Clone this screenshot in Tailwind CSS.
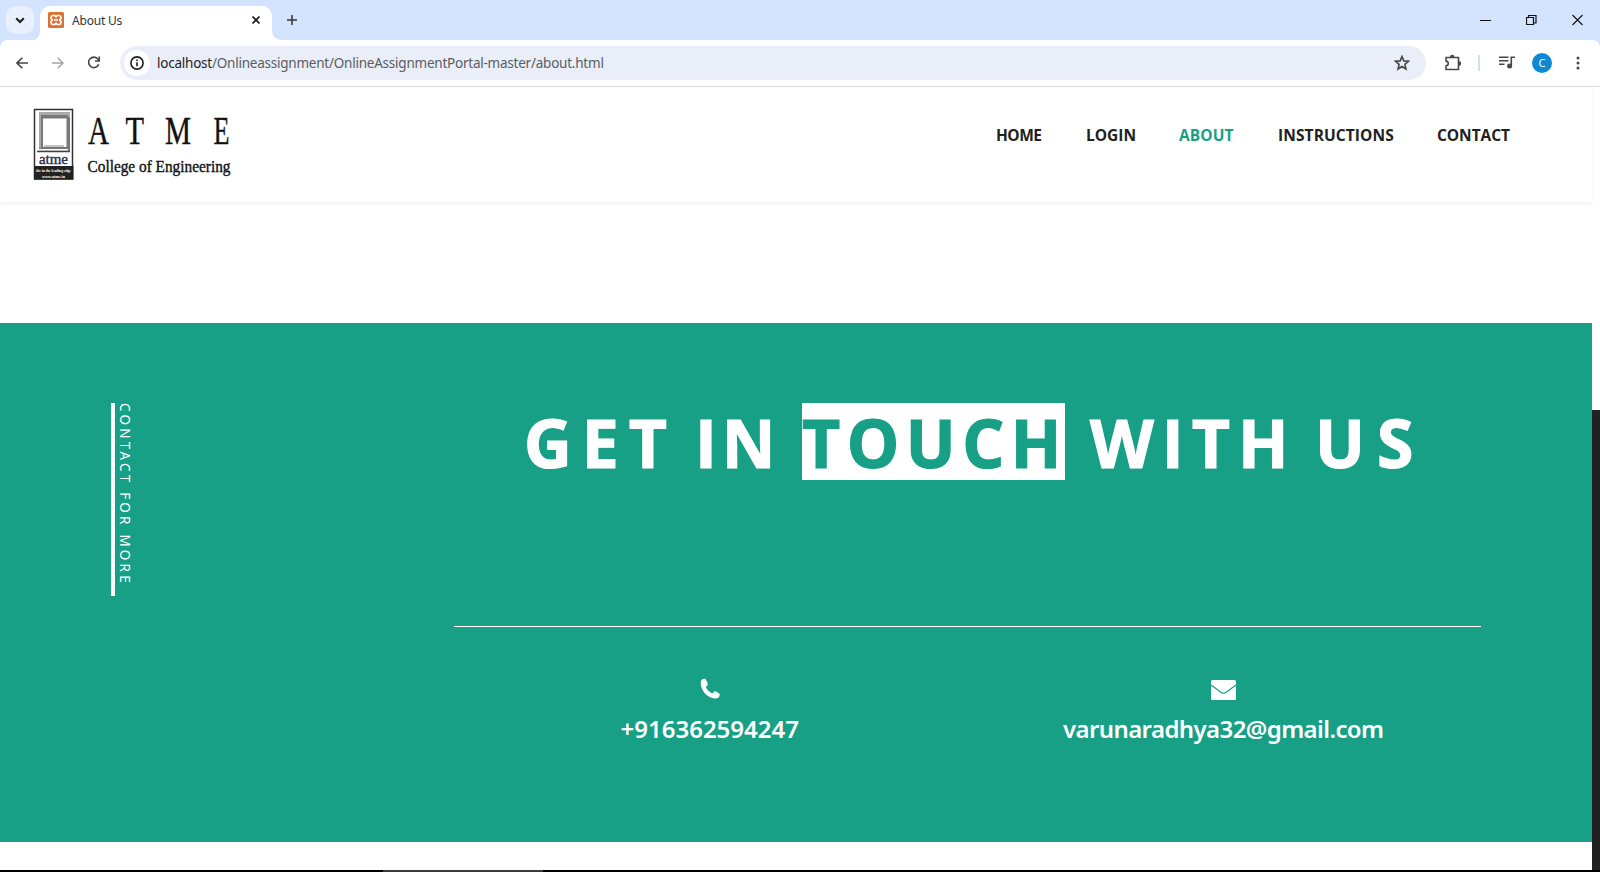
<!DOCTYPE html>
<html lang="en">
<head>
<meta charset="utf-8">
<title>About Us</title>
<script src="https://cdn.jsdelivr.net/npm/@tailwindcss/browser@4"></script>
</head>
<body class="w-[1600px] h-[872px] overflow-hidden bg-white flex flex-col font-['Noto_Sans',sans-serif]">
<!-- Tab strip -->
<div class="h-10 shrink-0 bg-[#d3e3fd] flex">
  <div class="mt-[6px] ml-[6px] size-7 rounded-[10px] bg-[#e9effd] flex items-center justify-center">
    <svg width="10" height="7" viewBox="0 0 10 7" fill="none" stroke="#1f1f1f" stroke-width="2"><path d="M1.2 1.2 5 5l3.800-3.800"/></svg>
  </div>
  <svg class="self-end" width="6" height="10" viewBox="0 0 6 10"><path d="M6 0v10H0Q6 8 6 0z" fill="#fff"/></svg>
  <div class="mt-[6px] w-[232px] rounded-t-[10px] bg-white flex items-start pl-2">
    <svg class="mt-[6px]" width="16" height="16" viewBox="0 0 16 16"><rect width="16" height="16" rx="1.500" fill="#dd7130"/><path d="M5 3.500h1.500c1 0 1 1.500 1.500 1.500s.5-1.500 1.500-1.500H11c2.500 0 2.500 3.300.8 4.500C13.500 9.200 13.500 12.500 11 12.500H9.500c-1 0-1-1.500-1.500-1.500s-.5 1.500-1.500 1.500H5C2.500 12.500 2.500 9.200 4.200 8 2.500 6.800 2.500 3.500 5 3.500zM6 8h4" fill="none" stroke="#fff" stroke-width="1.700"/></svg>
    <span class="ml-2 mt-[6px] w-[179px] text-xs leading-[18px] text-[#333] tracking-[-0.2px]">About Us</span>
    <svg class="mt-[10px] ml-[1px]" width="8" height="8" viewBox="0 0 8 8" stroke="#1f1f1f" stroke-width="1.600"><path d="M.5.5l7 7m0-7l-7 7"/></svg>
  </div>
  <svg class="self-end" width="8" height="10" viewBox="0 0 8 10"><path d="M0 0v10h8Q0 8 0 0z" fill="#fff"/></svg>
  <svg class="mt-[15px] ml-[7px]" width="10" height="10" viewBox="0 0 10 10" stroke="#333" stroke-width="1.500"><path d="M5 0v10M0 5h10"/></svg>
  <div class="ml-auto mt-[14px] mr-[17px] flex gap-[35px]">
    <svg width="11" height="12" stroke="#111"><path d="M0 6.500h11"/></svg>
    <svg width="11" height="12" fill="none" stroke="#111" stroke-width="1.200"><path d="M.5 3.500h7v7h-7zM2.500 3.500v-2h7.500v7.500H8"/></svg>
    <svg width="11" height="12" stroke="#111" stroke-width="1.100"><path d="M.5 1l10 10m0-10l-10 10"/></svg>
  </div>
</div>
<!-- Toolbar -->
<div class="h-[47px] shrink-0 bg-[#d3e3fd]">
 <div class="h-full bg-white rounded-t-[8px] border-b border-[#dcdcdc] flex items-center pb-[1px]">
  <svg class="ml-4" width="12" height="12" viewBox="0 0 12 12" fill="none" stroke="#474747" stroke-width="1.600"><path d="M12 6H1.200M6.300.7 1 6l5.300 5.300"/></svg>
  <svg class="ml-6" width="12" height="12" viewBox="0 0 12 12" fill="none" stroke="#a5a5a5" stroke-width="1.400"><path d="M0 6h10.800M5.700.7 11 6l-5.300 5.300"/></svg>
  <svg class="ml-6" width="12" height="13" viewBox="0 0 12 13" fill="none" stroke="#474747" stroke-width="1.600"><path d="M10.700 8.200A5.200 5.200 0 1 1 9.800 3l1.400 1.500M11.200.6V5H7"/></svg>
  <div class="ml-5 w-[1306px] h-[34px] rounded-full bg-[#e9eef8] flex items-center pl-1 pr-4">
    <div class="size-[26px] rounded-full bg-white flex items-center justify-center">
      <svg width="14" height="14" viewBox="0 0 14 14" fill="none" stroke="#1f1f1f" stroke-width="1.600"><circle cx="7" cy="7" r="6.100"/><path d="M7 6.300v4M7 3.600v1.500"/></svg>
    </div>
    <span class="ml-[7px] pt-[2px] w-[452px] text-[13.5px] text-[#5a5d61] tracking-[-0.23px] whitespace-nowrap"><span class="text-[#1f1f1f]">localhost</span>/Onlineassignment/OnlineAssignmentPortal-master/about.html</span>
    <svg class="ml-auto" width="16" height="16" viewBox="0 0 16 16" fill="none" stroke="#474747" stroke-width="1.600"><path d="M8 1.500l1.800 4.400 4.700.4-3.600 3.100 1.100 4.600L8 11.500 4 14l1.100-4.600L1.500 6.300l4.700-.4z"/></svg>
  </div>
  <svg class="ml-[18px]" width="18" height="18" viewBox="0 0 18 18"><path d="M2 3.500h12.500v12H2v-3.600c3-.4 3-4.400 0-4.800z" fill="none" stroke="#474747" stroke-width="1.600" stroke-linejoin="round"/><path d="M6 3a2.200 2.200 0 0 1 4.400 0zM15 7.300a2.200 2.200 0 0 1 0 4.400z" fill="#474747"/></svg>
  <div class="ml-4 w-[2px] h-4 bg-[#cfe0fb]"></div>
  <svg class="ml-[19px]" width="16" height="13" viewBox="0 0 16 13" fill="none" stroke="#474747" stroke-width="1.600"><path d="M0 1.300h9.500M0 4.800h9.500M0 8.300h5.500M12.300 10V1.300H16"/><circle cx="10.600" cy="10" r="1.700" fill="#474747"/></svg>
  <div class="ml-[17px] size-5 rounded-full bg-[#0d88d2] text-white text-[11px] leading-5 text-center">C</div>
  <svg class="ml-[24px]" width="4" height="14" fill="#474747"><circle cx="2" cy="2" r="1.500"/><circle cx="2" cy="7" r="1.500"/><circle cx="2" cy="12" r="1.500"/></svg>
 </div>
</div>
<!-- Page viewport -->
<div class="flex h-[783px] shrink-0">
 <div class="w-[1592px] flex flex-col">
  <header class="h-[115px] shrink-0 flex items-start justify-between shadow-[0_2px_4px_rgba(0,0,0,0.06)]">
    <svg class="ml-8 mt-5 overflow-visible" width="240" height="80" viewBox="32 107 240 80" font-family="'Liberation Serif',serif">
      <rect x="34.500" y="109.500" width="38" height="69.500" fill="#fff" stroke="#333" stroke-width="1.500"/>
      <path d="M39 112h31v40H37v-1.500h2z" fill="#777"/>
      <path d="M39 112h31v5H43v31h-4z" fill="#aaa"/>
      <path d="M41 115h27v33H41z" fill="#777"/>
      <path d="M43 118.500h23.500V147H43z" fill="#fff"/>
      <path d="M44 146h20" stroke="#888" stroke-width="1"/>
      <path d="M37 151.500h33" stroke="#444" stroke-width="1.500"/>
      <path d="M37 149h31v1.500H37z" fill="#fff"/>
      <text x="39" y="164" font-size="15" textLength="29" lengthAdjust="spacingAndGlyphs" fill="#1e3050" stroke="#1e3050" stroke-width=".4">atme</text>
      <rect x="34" y="166" width="39.500" height="13.500" fill="#222"/>
      <text x="36" y="172" font-size="5" font-weight="bold" textLength="35" lengthAdjust="spacingAndGlyphs" fill="#fff">the in the leading edge</text>
      <text x="42" y="178" font-size="5" font-weight="bold" textLength="23" lengthAdjust="spacingAndGlyphs" fill="#fff">www.atme.in</text>
      <g font-size="40" fill="#111" stroke="#111" stroke-width=".4">
        <text x="88" y="143.500" textLength="21" lengthAdjust="spacingAndGlyphs">A</text>
        <text x="125.500" y="143.500" textLength="18.500" lengthAdjust="spacingAndGlyphs">T</text>
        <text x="165" y="143.500" textLength="26" lengthAdjust="spacingAndGlyphs">M</text>
        <text x="213.500" y="143.500" textLength="16" lengthAdjust="spacingAndGlyphs">E</text>
      </g>
      <text x="87.500" y="171.500" font-size="17.500" textLength="143" lengthAdjust="spacingAndGlyphs" fill="#111" stroke="#111" stroke-width=".4">College of Engineering</text>
    </svg>
    <nav class="mt-[36px] mr-[83px] flex gap-[44px] text-[15.5px] leading-6 font-bold text-[#212121] whitespace-nowrap font-['Open_Sans']">
      <a class="w-[46px] tracking-[-0.5px]">HOME</a>
      <a class="w-[49px] tracking-[0px]">LOGIN</a>
      <a class="w-[55px] tracking-[0.1px] text-[#17a085]">ABOUT</a>
      <a class="w-[115px] tracking-[0.1px]">INSTRUCTIONS</a>
      <a class="w-[72px] tracking-[-0.05px]">CONTACT</a>
    </nav>
  </header>
  <section class="mt-[121px] h-[519px] shrink-0 bg-[#17a085] text-white flex pt-20">
    <div class="ml-[111px] w-[343px]">
      <div class="h-[193px] w-[24px] border-l-4 border-white [writing-mode:vertical-rl] text-[13.5px] leading-[20px] tracking-[3.2px] whitespace-nowrap">CONTACT FOR MORE</div>
    </div>
    <div class="w-[1027px]">
      <div class="h-[224px] border-b border-white">
        <h1 class="flex h-[77px] text-[66px] leading-[78px] font-bold whitespace-nowrap font-['Open_Sans'] [-webkit-text-stroke:1.2px]">
          <span class="ml-[70px] w-[171px] tracking-[10px]">GET</span><span class="w-[107px] tracking-[5px]">IN</span><span class="w-[263px] tracking-[6.5px] bg-white text-[#17a085]">TOUCH</span><span class="ml-[25px] w-[225px] tracking-[8px]">WITH</span><span class="tracking-[12px]">US</span>
        </h1>
      </div>
      <div class="flex text-2xl leading-8 font-semibold text-center whitespace-nowrap">
        <div class="w-1/2 pt-[51px] flex flex-col items-center pr-[2px]">
          <svg width="20" height="21" viewBox="0 0 20 21"><path d="M4 .5C1.500 1 .5 3 .7 5.500 1.200 13 7.500 20 15 20.500c2.500 0 4.600-1 4.800-4 0-1.200-3.800-3.300-5-3.300-1 0-1.500 2-2.600 2C10.500 15 6 10.800 6 9c0-1 1.800-1.600 1.800-2.600C7.600 5 6.300.3 4 .5z" fill="#fff"/></svg>
          <div class="mt-[14px]">+916362594247</div>
        </div>
        <div class="w-1/2 pt-[53px] flex flex-col items-center pr-[2px]">
          <svg width="25" height="20" viewBox="0 0 25 20"><rect width="25" height="20" rx="1.500" fill="#fff"/><path d="M0 5l9.500 7q3 2.500 6 0L25 5" fill="none" stroke="#17a085" stroke-width="1.200"/></svg>
          <div class="mt-[13px] tracking-[-0.6px]">varunaradhya32@gmail.com</div>
        </div>
      </div>
    </div>
  </section>
 </div>
 <div class="w-2 pt-[323px]"><div class="h-[460px] bg-[#212121]"></div></div>
</div>
<div class="h-[2px] shrink-0 bg-black flex"><div class="ml-[383px] w-[160px] bg-[#3c3c3c]"></div></div>
</body>
</html>
